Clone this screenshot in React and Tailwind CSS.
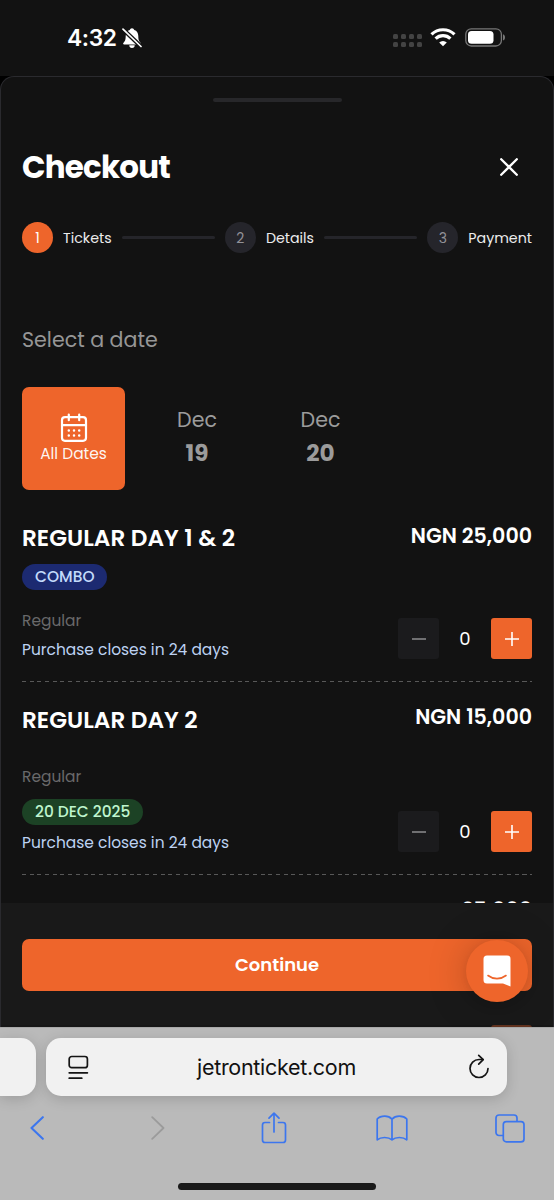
import { useState } from 'react';

const STEPS = ['Tickets', 'Details', 'Payment'];

function StatusBar() {
  return (
    <div className="h-[76px] shrink-0 bg-[#121212] flex items-start justify-between pl-[67px] pr-12 pt-[26px] font-['Inter',sans-serif]">
      <div className="flex items-center gap-[5px] h-6">
        <span className="text-[22.800px] leading-6 font-semibold tracking-[-0.400px] text-white">4:32</span>
        <svg width="20" height="22" viewBox="0 0 20 22" fill="white">
          <path d="M10 1.200a2.400 2.400 0 0 0-2.300 1.700C5 3.700 3.800 6 3.700 9c0 4-.7 5.200-2.200 6.700-.7.800-.3 1.700.6 1.700h15.800c.9 0 1.300-.9.6-1.700-1.500-1.500-2.200-2.700-2.200-6.700-.1-3-1.300-5.300-4-6.100A2.400 2.400 0 0 0 10 1.200zM7.300 18.300a2.700 2.700 0 0 0 5.400 0z" />
          <path d="M1 2.200 19 19.500" stroke="#121212" strokeWidth="4.200" />
          <path d="M1 2.200 19 19.500" stroke="white" strokeWidth="1.700" strokeLinecap="round" />
        </svg>
      </div>
      <div className="flex items-center h-[23px]">
        <div className="grid grid-cols-4 gap-[3px] mr-2 mt-[6px]">
          {Array.from({ length: 8 }, (_, i) => (
            <span key={i} className="size-[5px] rounded-[1.500px] bg-[#434343]" />
          ))}
        </div>
        <svg width="26" height="19" viewBox="0 0 26 19" fill="none" stroke="white" strokeWidth="3.200" className="mr-[9px]">
          <path d="M1.500 6.400a16.500 16.500 0 0 1 23 0" />
          <path d="M5.600 10.700a10.600 10.600 0 0 1 14.800 0" />
          <path d="M13 18.300 9.200 14.500a5.500 5.500 0 0 1 7.600 0z" fill="white" stroke="none" />
        </svg>
        <svg width="41" height="19" viewBox="0 0 41 19">
          <rect x="0.800" y="0.800" width="35.600" height="17.200" rx="5.500" fill="none" stroke="#777" strokeWidth="1.300" />
          <rect x="3" y="3" width="25.500" height="12.800" rx="3.600" fill="white" />
          <path d="M38 6.300c1.400.5 2 1.700 2 3.100s-.6 2.600-2 3.100z" fill="#777" />
        </svg>
      </div>
    </div>
  );
}

function Stepper() {
  return (
    <div className="flex items-center gap-2.5 h-[31px]">
      {STEPS.map((label, i) => (
        <div key={label} className="contents">
          {i > 0 && <span className="flex-1 h-[3px] rounded-full bg-[#25252a]" />}
          <span
            className={`size-[31px] shrink-0 rounded-full flex items-center justify-center text-sm leading-none ${
              i === 0 ? 'bg-[#ee652b] text-white' : 'bg-[#25252b] text-[#929298]'
            }`}
          >
            {i + 1}
          </span>
          <span className="text-[14.250px] leading-5 text-[#ececec]">{label}</span>
        </div>
      ))}
    </div>
  );
}

function CalendarIcon() {
  return (
    <svg width="28" height="30" viewBox="0 0 28 30" fill="none" stroke="white" strokeWidth="2.200" strokeLinecap="round">
      <rect x="2" y="4.200" width="24" height="23.600" rx="3" />
      <path d="M2 12.200h24M8.800 1.500v5.700M19.200 1.500v5.700" />
      <path d="M8.800 17.400h.01M14 17.400h.01M19.200 17.400h.01M8.800 22.600h.01M14 22.600h.01M19.200 22.600h.01" strokeWidth="2.500" />
    </svg>
  );
}

function DateTabs() {
  return (
    <div className="flex gap-[20.500px]">
      <button type="button" className="w-[103px] h-[103px] rounded-[7px] bg-[#ee652b] flex flex-col items-center pt-[26px]">
        <CalendarIcon />
        <span className="text-[15.450px] leading-[21px] text-white/95">All Dates</span>
      </button>
      {['19', '20'].map((day) => (
        <button key={day} type="button" className="w-[103px] h-[103px] flex flex-col items-center pt-4 text-[#9b9b9b]">
          <span className="text-[20.600px] leading-[34px]">Dec</span>
          <span className="text-[23.200px] leading-[33px] font-bold">{day}</span>
        </button>
      ))}
    </div>
  );
}

function Quantity() {
  const [count, setCount] = useState(0);
  return (
    <div className="flex items-center">
      <button
        type="button"
        aria-label="Decrease"
        onClick={() => setCount(Math.max(0, count - 1))}
        className="size-[41px] rounded-[3px] bg-[#1b1b1d] flex items-center justify-center"
      >
        <svg width="14" height="14" viewBox="0 0 14 14" stroke="#808082" strokeWidth="1.700">
          <path d="M0 7h14" />
        </svg>
      </button>
      <span className="w-[52px] text-center text-[18px] leading-[41px] text-white">{count}</span>
      <AddButton onClick={() => setCount(count + 1)} />
    </div>
  );
}

function AddButton({ onClick }) {
  return (
    <button
      type="button"
      aria-label="Increase"
      onClick={onClick}
      className="size-[41px] rounded-[3px] bg-[#ee652b] flex items-center justify-center"
    >
      <svg width="14" height="14" viewBox="0 0 14 14" stroke="white" strokeWidth="1.600">
        <path d="M7 0v14M0 7h14" />
      </svg>
    </button>
  );
}

function Divider() {
  return (
    <div className="h-px bg-[repeating-linear-gradient(90deg,#585858_0_4px,transparent_4px_7.700px)]" />
  );
}

function ComboTicket() {
  return (
    <div className="h-[164px]">
      <div className="flex justify-between">
        <h3 className="text-[23.200px] leading-[43px] font-semibold text-white">REGULAR DAY 1 &amp; 2</h3>
        <span className="text-[20.600px] leading-[38px] font-semibold text-white">NGN 25,000</span>
      </div>
      <div className="mt-1 flex">
        <span className="h-[26px] px-[13px] rounded-full bg-[#1c2a71] text-[#c3dafb] text-[15.450px] leading-[26px] font-medium">
          COMBO
        </span>
      </div>
      <div className="flex justify-between mt-[17px]">
        <div>
          <p className="text-[15.450px] leading-7 text-[#69696a]">Regular</p>
          <p className="text-[15.450px] leading-[29px] text-[#bdd2f2]">Purchase closes in 24 days</p>
        </div>
        <div className="mt-[11px]">
          <Quantity />
        </div>
      </div>
    </div>
  );
}

function DayTicket() {
  return (
    <div className="h-[192px]">
      <div className="flex justify-between">
        <h3 className="text-[23.200px] leading-[76px] font-semibold text-white">REGULAR DAY 2</h3>
        <span className="text-[20.600px] leading-[70px] font-semibold text-white">NGN 15,000</span>
      </div>
      <div className="flex justify-between mt-[5px]">
        <div>
          <p className="text-[15.450px] leading-7 text-[#69696a]">Regular</p>
          <div className="flex mt-2">
            <span className="h-[26px] px-[13px] rounded-full bg-[#1c4225] text-[#bff5ce] text-[15.450px] leading-[26px] font-medium">
              20 DEC 2025
            </span>
          </div>
          <p className="mt-[3px] text-[15.450px] leading-[29px] text-[#bdd2f2]">Purchase closes in 24 days</p>
        </div>
        <div className="mt-12">
          <Quantity />
        </div>
      </div>
    </div>
  );
}

function CheckoutFooter() {
  return (
    <div className="absolute inset-x-0 bottom-0 h-[124px]">
      <div className="h-[122px] bg-[#191919] px-[21px] pt-[35.500px]">
        <button type="button" className="w-full h-[52px] rounded-[7px] bg-[#ee652b] text-white text-[18px] font-semibold leading-[52px]">
          Continue
        </button>
      </div>
      <div className="h-0.5 bg-[#191919]/65" />
      <button
        type="button"
        aria-label="Chat"
        className="absolute right-[25px] top-[36.500px] size-[62px] rounded-full bg-[#ee652b] flex items-center justify-center shadow-[0_1px_8px_rgba(0,0,0,0.06),0_2px_40px_rgba(0,0,0,0.22)]"
      >
        <svg width="28" height="32" viewBox="0 0 28 32">
          <path d="M4 0.500h20a3.500 3.500 0 0 1 3.500 3.500v27.500L20 28.500H4A3.500 3.500 0 0 1 .5 25V4A3.500 3.500 0 0 1 4 .5z" fill="white" />
          <path d="M5 20.500c5.500 4.200 12.500 4.200 18 0" fill="none" stroke="#ee652b" strokeWidth="1.600" strokeLinecap="round" />
        </svg>
      </button>
    </div>
  );
}

function CheckoutSheet() {
  return (
    <div className="h-[951px] shrink-0 bg-black">
      <div className="relative h-full overflow-hidden rounded-t-[14px] border border-b-0 border-[#2a2a2e] bg-[#121212]">
        <div className="mx-auto mt-[21px] h-1 w-[129px] rounded-full bg-[#27272a]" />
        <div className="px-[21px]">
          <div className="mt-[45px] h-10 flex items-center justify-between">
            <h1 className="text-[30.900px] leading-[42px] pt-0.5 font-bold text-white tracking-tight">Checkout</h1>
            <svg width="18" height="18" viewBox="0 0 18 18" stroke="white" strokeWidth="2.300" strokeLinecap="round" className="mr-3.5">
              <path d="M1.200 1.200 16.800 16.800M16.800 1.200 1.200 16.800" />
            </svg>
          </div>
          <div className="mt-[35px]">
            <Stepper />
          </div>
          <p className="mt-[72px] text-[20.600px] leading-[30px] text-[#969696]">Select a date</p>
          <div className="mt-8">
            <DateTabs />
          </div>
          <div className="mt-[27px]">
            <ComboTicket />
          </div>
          <Divider />
          <DayTicket />
          <Divider />
          <div className="h-[150px] pt-[19px]">
            <p className="text-right text-[20.600px] leading-[31px] font-semibold text-white">25,000</p>
            <div className="flex justify-end mt-[100px]">
              <AddButton />
            </div>
          </div>
        </div>
        <CheckoutFooter />
      </div>
    </div>
  );
}

function BrowserBar() {
  return (
    <div className="h-[173px] shrink-0 overflow-hidden bg-[#bababa] border-t border-[#a9a9a9] font-['Inter',sans-serif]">
      <div className="flex gap-2.5 mt-2.5">
        <div className="w-9 h-[58px] shrink-0 rounded-r-[15px] bg-[#f1f1f1] shadow-[0_3px_14px_rgba(0,0,0,0.16)]" />
        <div className="w-[461px] h-[58px] shrink-0 rounded-[15px] bg-[#f1f1f1] shadow-[0_3px_14px_rgba(0,0,0,0.16)] flex items-center justify-between pl-[22px] pr-[17px]">
          <svg width="21" height="25" viewBox="0 0 21 25" fill="none" stroke="#151515" strokeWidth="1.700" strokeLinecap="round">
            <rect x="1.200" y="1.500" width="18.200" height="11.200" rx="2.500" />
            <path d="M1.200 17.800h18.200M1.200 23.200h12.600" />
          </svg>
          <span className="text-[21.500px] leading-8 text-[#111] tracking-[-0.300px] mr-1">jetronticket.com</span>
          <svg width="22" height="26" viewBox="0 0 22 26" fill="none" stroke="#151515" strokeWidth="1.700" strokeLinecap="round" strokeLinejoin="round">
            <path d="M20 14.500A9 9 0 1 1 11 5.500h4" />
            <path d="M10.700 1.300 15.200 5.600 10.700 10.200" />
          </svg>
        </div>
      </div>
      <div className="flex items-center justify-between h-[64px] px-[15px] pr-[22px] text-[#3c76ee]">
        <span className="w-11 flex justify-center">
          <svg width="14" height="24" viewBox="0 0 14 24" fill="none" stroke="currentColor" strokeWidth="2.100" strokeLinecap="round" strokeLinejoin="round">
            <path d="M12.800 1.200 1.500 12l11.300 10.800" />
          </svg>
        </span>
        <span className="w-11 flex justify-center pl-1.5">
          <svg width="14" height="24" viewBox="0 0 14 24" fill="none" stroke="#9b9b9b" strokeWidth="1.800" strokeLinecap="round" strokeLinejoin="round">
            <path d="M1.200 1.200 12.500 12 1.200 22.800" />
          </svg>
        </span>
        <span className="w-11 flex justify-center">
          <svg width="26" height="32" viewBox="0 0 26 32" fill="none" stroke="currentColor" strokeWidth="1.700" strokeLinecap="round" strokeLinejoin="round">
            <path d="M8.500 10.500H4a2.500 2.500 0 0 0-2.500 2.500v15A2.500 2.500 0 0 0 4 30.500h18a2.500 2.500 0 0 0 2.500-2.500V13a2.500 2.500 0 0 0-2.500-2.500h-4.500M13 20V1.500M8 6.200l5-5 5 5" />
          </svg>
        </span>
        <span className="w-11 flex justify-center">
          <svg width="32" height="26" viewBox="0 0 32 26" fill="none" stroke="currentColor" strokeWidth="1.700" strokeLinejoin="round">
            <path d="M16 4.200C14 2 11.500 1.200 8.800 1.200 5.800 1.200 3 2 1.200 4v20.800c2-1.700 4.500-2.300 7.400-2.300 2.800 0 5.400.6 7.400 2.300 2-1.700 4.600-2.300 7.400-2.300 2.900 0 5.400.6 7.400 2.300V4c-1.800-2-4.600-2.800-7.600-2.800-2.700 0-5.200.8-7.200 3zM16 4.200v20.600" />
          </svg>
        </span>
        <span className="w-11 flex justify-center">
          <svg width="30" height="29" viewBox="0 0 30 29" fill="none" stroke="currentColor" strokeWidth="1.700">
            <rect x="8.300" y="7.600" width="20.700" height="20.300" rx="3" />
            <path d="M8.300 21.500H4a3 3 0 0 1-3-3V4a3 3 0 0 1 3-3h15a3 3 0 0 1 3 3v3.600" />
          </svg>
        </span>
      </div>
      <div className="mx-auto mt-[23px] h-[6.500px] w-[198px] rounded-full bg-[#1a1a1a]" />
    </div>
  );
}

export default function App() {
  return (
    <main className="w-[554px] h-[1200px] overflow-hidden flex flex-col bg-[#121212] antialiased font-['Poppins','Inter',sans-serif]">
      <StatusBar />
      <CheckoutSheet />
      <BrowserBar />
    </main>
  );
}
